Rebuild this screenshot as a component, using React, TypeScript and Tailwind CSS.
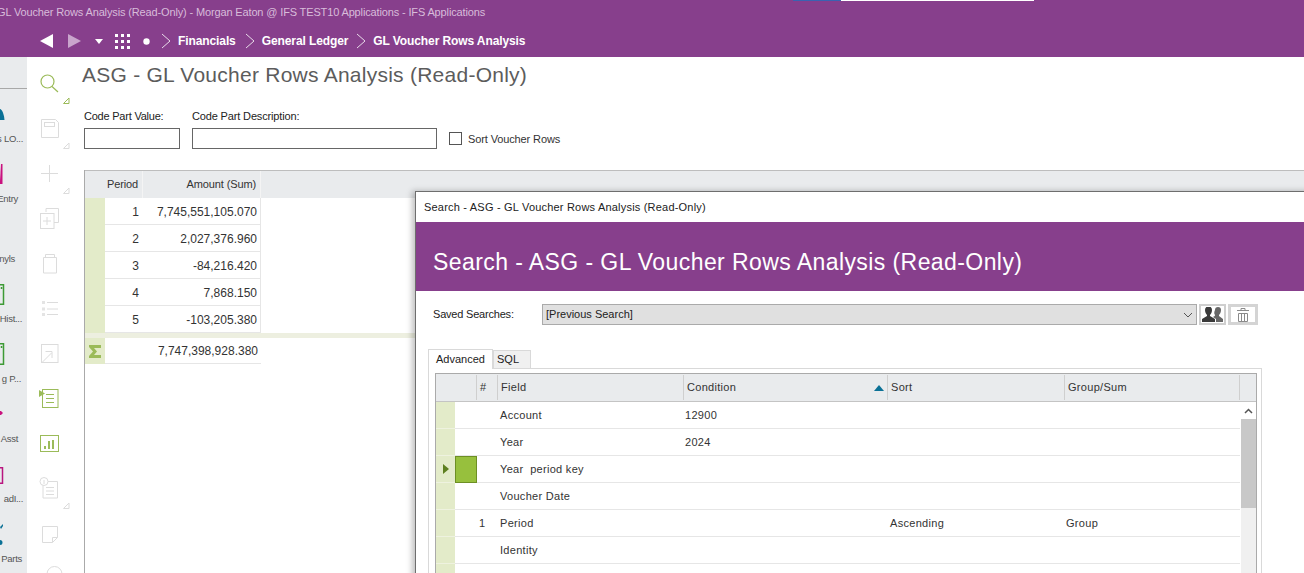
import { ReactNode } from 'react'

const PALE = '#dcdcdc'
const GREEN = '#9bbb59'

function Corner({ color = PALE }: { color?: string }) {
  return <path d="M36.500 41.500h5.500v-5.500z" fill="none" stroke={color} strokeWidth="1" />
}

const toolIcons: ReactNode[] = [
  <>
    <circle cx="20.500" cy="19.500" r="6.500" stroke={GREEN} strokeWidth="1.200" />
    <path d="M25 24.500l6 5.500" stroke={GREEN} strokeWidth="1.200" />
    <Corner color={GREEN} />
  </>,
  <>
    <path d="M14.500 12.500h14l3 3v15h-17z" stroke={PALE} />
    <rect x="17.500" y="15.500" width="10" height="4" stroke={PALE} />
    <Corner />
  </>,
  <>
    <path d="M22.500 13v17M14 21.500h17" stroke={PALE} />
    <Corner />
  </>,
  <>
    <path d="M19 15v-3.500h12.500v14H27" stroke={PALE} />
    <rect x="13.500" y="16.500" width="13.500" height="15" stroke={PALE} />
    <path d="M20 20v8M16 24h8" stroke={PALE} />
  </>,
  <>
    <path d="M16.500 15.500h13v15.500h-13zM18.500 15.500v-3h9v3" stroke={PALE} />
  </>,
  <>
    <path d="M15 14h3v3h-3zM15 20.500h3v3h-3zM15 26h3v3h-3z" fill="#e4e4e4" />
    <path d="M20 15.500h11M20 22h11M20 27.500h11" stroke={PALE} />
  </>,
  <>
    <rect x="14.500" y="12.500" width="16.500" height="18" stroke={PALE} />
    <path d="M15.500 30l9-9M18.500 19.500h6.500v6.500" stroke={PALE} />
  </>,
  <>
    <rect x="15.500" y="12.500" width="15.500" height="18" stroke={GREEN} />
    <path d="M19 17.500h8M19 21.500h8M19 25.500h8" stroke={GREEN} />
    <path d="M12 13v7l6-3.500z" fill={GREEN} />
  </>,
  <>
    <rect x="13.500" y="13.500" width="18" height="16" stroke={GREEN} />
    <path d="M17 24h2v3h-2zM21 19h2v8h-2zM25 18h2v9h-2z" fill={GREEN} />
  </>,
  <>
    <path d="M16 14.500h14.500v16.500h-14.500z" stroke={PALE} />
    <path d="M19 20.500h8M19 24h8M19 27.500h8" stroke={PALE} />
    <circle cx="17" cy="14.500" r="4" fill="#fff" stroke={PALE} />
    <path d="M17 13v4" stroke={PALE} />
    <Corner />
  </>,
  <>
    <path d="M15.500 14.500h15v11l-5 5h-10zM30.500 25.500h-5v5" stroke={PALE} />
  </>,
  <circle cx="27.500" cy="17" r="7.500" stroke={PALE} />,
]

const sideItems: { label: string; pos: string; icon: ReactNode }[] = [
  { label: 's LO...', pos: 'right-[4px]', icon: <path d="M0 19c2 0 4 5 4.500 11H0z" fill="#0b7196" /> },
  { label: 'Entry', pos: 'right-[9px]', icon: <path d="M1 14h1.500v20H0v-3H0z" fill="#c9127f" /> },
  { label: 'nyls', pos: 'right-[12px]', icon: null },
  { label: 'Hist...', pos: 'right-[5px]', icon: <path d="M-2 14.800h5.500v19.500H-2zM1.500 17v2" fill="none" stroke="#3d9a35" strokeWidth="1.500" /> },
  { label: 'g P...', pos: 'right-[6px]', icon: <path d="M-2 13.800h5.500v20.500H-2zM1.500 16v2" fill="none" stroke="#3d9a35" strokeWidth="1.500" /> },
  { label: 'Asst', pos: 'right-[9px]', icon: <path d="M0 21h1l2 2-2 2H0z" fill="#c9127f" /> },
  { label: 'adI...', pos: 'right-[4px]', icon: <path d="M-2 17.800h4.500v15.500H-2z" fill="none" stroke="#b9157f" strokeWidth="1.500" /> },
  { label: 'Parts', pos: 'right-[5px]', icon: <path d="M0 17l3-3v2l-2 3zM0 30a2.500 2.500 0 0 1 0 5z" fill="#0b7196" /> },
]

const periodRows = [
  ['1', '7,745,551,105.070'],
  ['2', '2,027,376.960'],
  ['3', '-84,216.420'],
  ['4', '7,868.150'],
  ['5', '-103,205.380'],
]

const searchRows = [
  { num: '', field: 'Account', condition: '12900', sort: '', group: '' },
  { num: '', field: 'Year', condition: '2024', sort: '', group: '' },
  { num: '', field: 'Year  period key', condition: '', sort: '', group: '', active: true },
  { num: '', field: 'Voucher Date', condition: '', sort: '', group: '' },
  { num: '1', field: 'Period', condition: '', sort: 'Ascending', group: 'Group' },
  { num: '', field: 'Identity', condition: '', sort: '', group: '' },
  { num: '', field: '', condition: '', sort: '', group: '' },
]

function SearchDialog() {
  return (
    <div className="absolute left-[415px] top-[191px] w-[900px] h-[400px] bg-white border-l border-t border-[#6e6e6e] shadow-[-3px_0_6px_rgba(0,0,0,0.25)]">
      <div className="h-[30px] flex items-center pl-[8px] text-[11px] tracking-[0.2px] text-[#222]">
        Search - ASG - GL Voucher Rows Analysis (Read-Only)
      </div>
      <div className="h-[69px] bg-[#873f8c] flex items-center pl-[17px] pt-[12px] text-[23px] text-white tracking-[0.42px]">
        Search - ASG - GL Voucher Rows Analysis (Read-Only)
      </div>

      <div className="flex items-center h-[21px] mt-[13px] pl-[17px]">
        <div className="w-[109px] text-[11px] tracking-[-0.2px] text-[#222]">Saved Searches:</div>
        <div className="w-[655px] h-[21px] bg-[#e0e0e0] border border-[#aaaaaa] flex items-center justify-between pl-[3px] pr-[3px] text-[11px] text-[#222]">
          <span>[Previous Search]</span>
          <svg width="10" height="6" viewBox="0 0 10 6" fill="none"><path d="M1 1l4 4 4-4" stroke="#555" /></svg>
        </div>
        <div className="ml-[2px] w-[27px] h-[21px] border-2 border-[#cfcfcf] bg-white flex items-center justify-center">
          <svg width="21" height="16" viewBox="0 0 21 16" fill="#3a3a3a">
            <path d="M13 3a3 3 0 0 1 6 0c0 2-1 4-2 5v1l4 3v3h-7v-3l-3-2c1-.5 2-1 2-2-1-1-1-3 0-5z" fill="#666" />
            <path d="M3 3a3.500 3.500 0 0 1 7 0c0 2-1 4-2 5v1l5 3v3H0v-3l5-3V8C4 7 3 5 3 3z" />
          </svg>
        </div>
        <div className="ml-[2px] w-[30px] h-[21px] border-[3px] border-[#d4d4d4] bg-white flex items-center justify-center">
          <svg width="14" height="15" viewBox="0 0 14 15" fill="none" stroke="#8a8a8a">
            <path d="M1 3.500h12M5 3V1.500h4V3M2.500 6.500h9v8h-9zM5.500 6.500v8M8.500 6.500v8" />
          </svg>
        </div>
      </div>

      <div className="ml-[12px] mt-[23px] flex items-end h-[20px]">
        <div className="w-[65px] h-[20px] border border-b-0 border-[#d9d9d9] bg-white flex items-center justify-center text-[11px] text-[#222] relative top-[1px]">Advanced</div>
        <div className="w-[38px] h-[18px] border border-b-0 border-[#d9d9d9] bg-[#f0f0f0] flex items-center pl-[3px] text-[11px] text-[#222]">SQL</div>
      </div>

      <div className="ml-[12px] w-[834px] h-[220px] border border-[#d9d9d9] pl-[6px] pt-[4px]">
        <div className="w-[822px] h-[200px] border border-[#aaaaaa] border-b-0">
          <div className="h-[28px] flex bg-[#e9ebed] border-b border-[#c4c4c4] text-[11px] tracking-[0.3px] text-[#333]">
            <div className="w-[41px] mt-[1px] mb-[1px] border-r border-[#cfcfcf]" />
            <div className="w-[21px] mt-[1px] mb-[1px] border-r border-[#cfcfcf] flex items-center pl-[3px]">#</div>
            <div className="w-[186px] mt-[1px] mb-[1px] border-r border-[#cfcfcf] flex items-center pl-[3px]">Field</div>
            <div className="w-[204px] mt-[1px] mb-[1px] border-r border-[#cfcfcf] flex items-center justify-between pl-[3px] pr-[3px]">
              <span>Condition</span>
              <svg width="10" height="6" viewBox="0 0 10 6"><path d="M5 0l5 6H0z" fill="#0b7196" /></svg>
            </div>
            <div className="w-[177px] mt-[1px] mb-[1px] border-r border-[#cfcfcf] flex items-center pl-[3px]">Sort</div>
            <div className="w-[175px] mt-[1px] mb-[1px] border-r border-[#cfcfcf] flex items-center pl-[3px]">Group/Sum</div>
          </div>
          <div className="flex">
            <div className="w-[804px]">
              {searchRows.map((row, i) => (
                <div key={i} className="h-[27px] flex text-[11px] tracking-[0.3px] text-[#333]">
                  <div className="w-[19px] bg-[#e3ebc9] border-b border-[#eef2df] flex items-center justify-center">
                    {row.active && <svg width="6" height="10" viewBox="0 0 6 10"><path d="M0 0l6 5-6 5z" fill="#5d7f1f" /></svg>}
                  </div>
                  <div className={row.active ? 'w-[22px] bg-[#97c03d] border border-[#6d8f24]' : 'w-[22px] border-b border-[#e6e6e6]'} />
                  <div className="w-[20px] border-b border-[#e6e6e6] flex items-center pl-[2px]">{row.num}</div>
                  <div className="w-[186px] border-b border-[#e6e6e6] flex items-center pl-[3px] whitespace-pre">{row.field}</div>
                  <div className="w-[204px] border-b border-[#e6e6e6] flex items-center pl-[2px]">{row.condition}</div>
                  <div className="w-[177px] border-b border-[#e6e6e6] flex items-center pl-[3px]">{row.sort}</div>
                  <div className="w-[176px] border-b border-[#e6e6e6] flex items-center pl-[2px]">{row.group}</div>
                </div>
              ))}
            </div>
            <div className="w-[15px] ml-[1px] bg-[#f0f0f0] h-[172px]">
              <div className="h-[17px] bg-white flex items-center justify-center">
                <svg width="9" height="6" viewBox="0 0 9 6" fill="none"><path d="M1 5l3.500-3.500L8 5" stroke="#555" strokeWidth="1.500" /></svg>
              </div>
              <div className="h-[89px] bg-[#c8c8c8]" />
            </div>
          </div>
        </div>
      </div>
    </div>
  )
}

export default function App() {
  return (
    <div className="relative w-[1304px] h-[573px] overflow-hidden bg-white font-['Liberation_Sans',Arial,sans-serif]">
      <header className="relative h-[57px] bg-[#873f8c]">
        <div className="absolute left-[793px] top-0 w-[48px] h-[1px] bg-[#3a62b0]" />
        <div className="absolute left-[841px] top-0 w-[193px] h-[1px] bg-white" />
        <div className="h-[25px] flex items-center -ml-[3px] text-[11px] tracking-[-0.14px] text-[#d8bcda] whitespace-nowrap">
          GL Voucher Rows Analysis (Read-Only) - Morgan Eaton @ IFS TEST10 Applications - IFS Applications
        </div>
        <nav className="h-[32px] flex items-center text-[12px] font-bold tracking-[-0.1px] text-white whitespace-nowrap">
          <svg className="ml-[40px]" width="13" height="14" viewBox="0 0 13 14"><path d="M13 0v14L0 7z" fill="#fff" /></svg>
          <svg className="ml-[15px]" width="13" height="14" viewBox="0 0 13 14"><path d="M0 0v14l13-7z" fill="#c9a5cc" /></svg>
          <svg className="ml-[14px]" width="8" height="5" viewBox="0 0 8 5"><path d="M0 0h8L4 5z" fill="#fff" /></svg>
          <svg className="ml-[12px]" width="16" height="15" viewBox="0 0 16 15" fill="#fff">
            <path d="M0 0h3v3H0zM6 0h3v3H6zM12 0h3v3h-3zM0 6h3v3H0zM6 6h3v3H6zM12 6h3v3h-3zM0 12h3v3H0zM6 12h3v3H6zM12 12h3v3h-3z" />
          </svg>
          <svg className="ml-[12px]" width="7" height="7" viewBox="0 0 7 7"><circle cx="3.500" cy="3.500" r="3.200" fill="#fff" /></svg>
          <svg className="ml-[11px]" width="10" height="16" viewBox="0 0 10 16" fill="none"><path d="M1 1l8 7-8 7" stroke="#e8dbe9" /></svg>
          <span className="ml-[7px]">Financials</span>
          <svg className="ml-[9px]" width="10" height="16" viewBox="0 0 10 16" fill="none"><path d="M1 1l8 7-8 7" stroke="#e8dbe9" /></svg>
          <span className="ml-[7px]">General Ledger</span>
          <svg className="ml-[8px]" width="10" height="16" viewBox="0 0 10 16" fill="none"><path d="M1 1l8 7-8 7" stroke="#e8dbe9" /></svg>
          <span className="ml-[7px]">GL Voucher Rows Analysis</span>
        </nav>
      </header>

      <div className="flex h-[516px]">
        <aside className="w-[27px] shrink-0 bg-[#e9ebed] overflow-hidden">
          <div className="h-[32px] mb-[1px] border-b border-[#a8a8a8]" />
          {sideItems.map(item => (
            <div key={item.label} className="h-[60px] relative">
              <svg className="block" width="27" height="40" viewBox="0 0 27 40">{item.icon}</svg>
              <div className={`absolute ${item.pos} top-[42px] text-[9.5px] leading-[13px] tracking-[-0.3px] text-[#555] whitespace-nowrap`}>{item.label}</div>
            </div>
          ))}
        </aside>

        <div className="w-[57px] shrink-0 pt-[5px] overflow-hidden">
          {toolIcons.map((icon, i) => (
            <svg key={i} className="block" width="57" height="45" viewBox="0 0 57 45" fill="none">{icon}</svg>
          ))}
        </div>

        <main className="flex-1">
          <h1 className="h-[36px] mb-[1px] -ml-[2px] flex items-center text-[21px] tracking-[0.25px] text-[#5c5c5c]">
            ASG - GL Voucher Rows Analysis (Read-Only)
          </h1>
          <div className="flex h-[76px]">
            <div className="w-[108px]">
              <div className="text-[11px] tracking-[-0.22px] text-[#222] h-[34px] pt-[15px] leading-[14px]">Code Part Value:</div>
              <div className="w-[96px] h-[21px] border border-[#666]" />
            </div>
            <div className="w-[257px]">
              <div className="text-[11px] tracking-[-0.15px] text-[#222] h-[34px] pt-[15px] leading-[14px]">Code Part Description:</div>
              <div className="w-[245px] h-[21px] border border-[#666]" />
            </div>
            <div className="flex items-start pt-[38px]">
              <div className="w-[13px] h-[13px] border border-[#555]" />
              <span className="ml-[6px] text-[11px] leading-[14px] tracking-[-0.12px] text-[#333]">Sort Voucher Rows</span>
            </div>
          </div>

          <div className="border-l border-[#aaaaaa] h-[403px]">
            <div className="h-[28px] flex bg-[#e9ebed] border-t border-[#bdbdbd] text-[11px] tracking-[-0.12px] text-[#333]">
              <div className="w-[20px]" />
              <div className="w-[38px] border-r border-[#f4f4f4] flex items-center justify-end pr-[4px]">Period</div>
              <div className="w-[118px] border-r border-[#f4f4f4] flex items-center justify-end pr-[4px]">Amount (Sum)</div>
            </div>
            {periodRows.map(([period, amount]) => (
              <div key={period} className="h-[27px] flex text-[12px] text-[#333]">
                <div className="w-[20px] bg-[#e3ebc9]" />
                <div className="w-[38px] border-b border-[#e6e6e6] flex items-center justify-end pr-[4px] pt-[1px]">{period}</div>
                <div className="w-[118px] border-b border-r border-[#e6e6e6] flex items-center justify-end pr-[3px] pt-[1px]">{amount}</div>
              </div>
            ))}
            <div className="h-[5px] bg-[#edefe0]" />
            <div className="h-[26px] flex text-[12px] text-[#333]">
              <div className="w-[20px] bg-[#e3ebc9] flex items-center justify-center">
                <svg width="12" height="13" viewBox="0 0 12 13"><path d="M0 0h12v3H5l3 3.500-3 3.500h7v3H0v-2l4-4.500L0 2z" fill="#9bbb59" /></svg>
              </div>
              <div className="w-[156px] border-b border-[#e6e6e6] flex items-center justify-end pr-[3px]">7,747,398,928.380</div>
            </div>
          </div>
        </main>
      </div>

      <SearchDialog />
    </div>
  )
}
